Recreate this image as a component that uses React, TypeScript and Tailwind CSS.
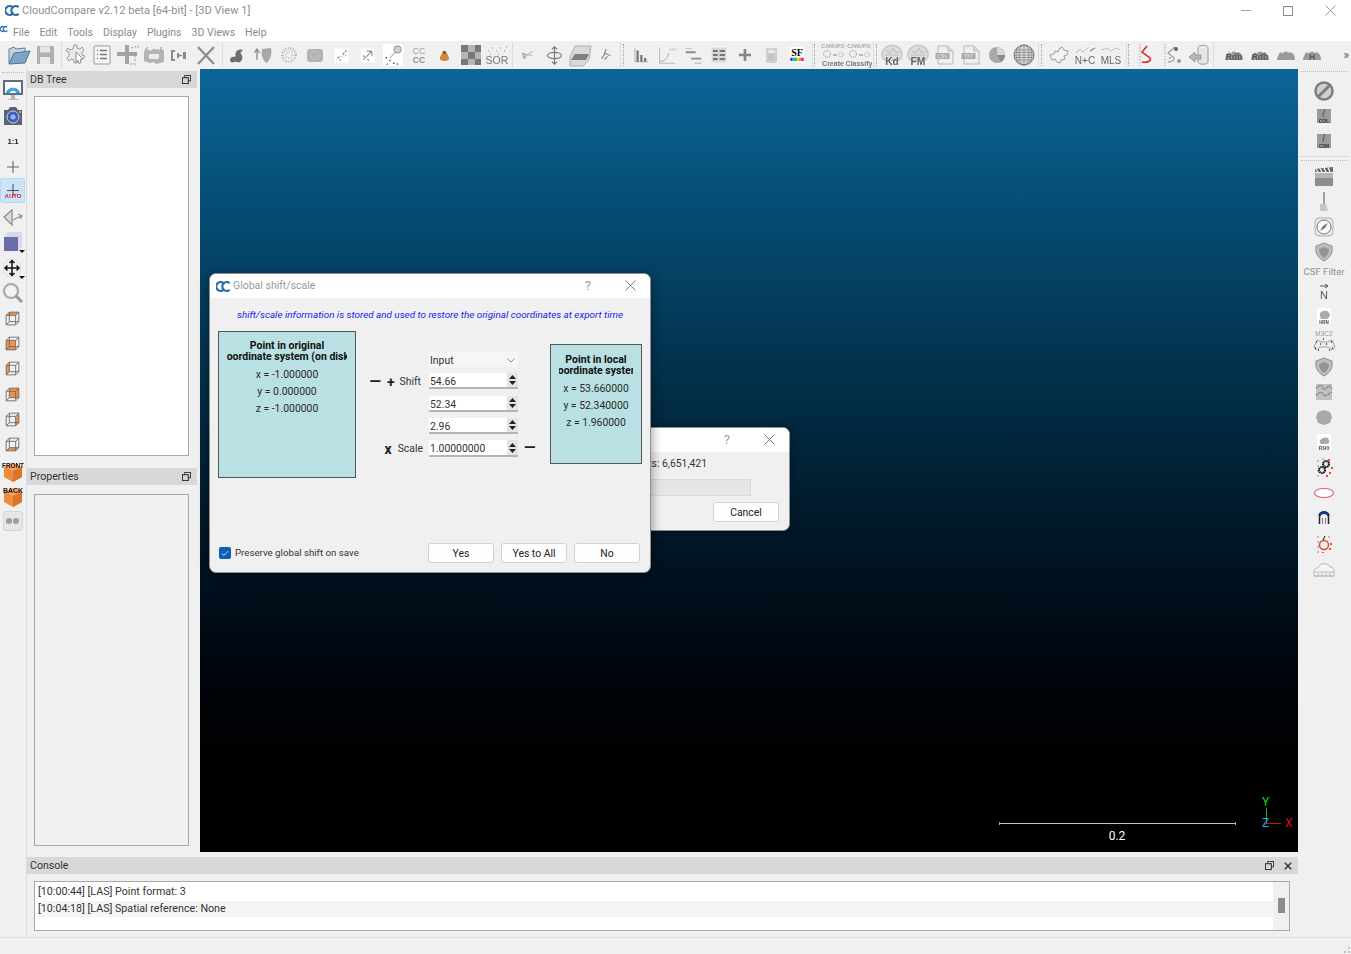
import type { ReactNode } from "react"

const FONT = "[font-family:Roboto,sans-serif]"

function Svg({ children, size = 24 }: { children: ReactNode; size?: number }) {
  return (
    <svg viewBox="0 0 24 24" width={size} height={size} className="blur-[0.35px] shrink-0" fontFamily="Liberation Sans, sans-serif">
      {children}
    </svg>
  )
}

function Logo({ size = 14 }: { size?: number }) {
  return (
    <svg viewBox="0 0 22 18" width={size} height={size} className="shrink-0">
      <path d="M11 4a6.500 6.500 0 1 0 0 10" fill="none" stroke="#2b6ea6" strokeWidth="3.400" />
      <path d="M20 4a6.500 6.500 0 1 0 0 10" fill="none" stroke="#2b6ea6" strokeWidth="3.400" />
    </svg>
  )
}

function Brain({ label }: { label: string }) {
  return (
    <Svg size={26}>
      <path d="M3 14c-2-6 4-11 9-11s11 4 9 11c-1 2-3 3-5 3H7c-2 0-3-1-4-3z" fill="#dcdcdc" stroke="#bdbdbd" />
      <path d="M6 8l4 2 3-4 3 4 3-1M5 12h14" fill="none" stroke="#c2c2c2" />
      <text x="12" y="21" fontSize="9.500" fontWeight="700" fill="#666666" textAnchor="middle">{label}</text>
    </Svg>
  )
}

function FileIcon({ label }: { label: string }) {
  return (
    <Svg>
      <path d="M5 3h10l5 5v13H5z" fill="#eeeeee" stroke="#b8b8b8" />
      <path d="M15 3v5h5" fill="#dddddd" stroke="#b8b8b8" />
      <rect x="2.500" y="10" width="14" height="6" fill="#a9a9a9" />
      <text x="9.500" y="15" fontSize="5" fill="#eeeeee" textAnchor="middle">{label}</text>
    </Svg>
  )
}

function Canupo({ label }: { label: string }) {
  return (
    <svg viewBox="0 0 26 26" width={26} height={26} className="blur-[0.35px] shrink-0" fontFamily="Liberation Sans, sans-serif">
      <text x="13" y="5.500" fontSize="5.400" fontWeight="700" fill="#a8a8a8" textAnchor="middle">CANUPO</text>
      <circle cx="7" cy="12" r="3.400" fill="none" stroke="#7f7f7f" strokeDasharray="1 1" />
      <path d="M13 13h4" stroke="#7f7f7f" />
      <circle cx="21" cy="12.500" r="2.400" fill="none" stroke="#9d9d9d" strokeDasharray="1 1" />
      <text x="13" y="23.500" fontSize="7" fontWeight="700" fill="#777777" textAnchor="middle">{label}</text>
    </svg>
  )
}

function BlobText({ label }: { label: string }) {
  return (
    <Svg>
      <path d="M3 17c0-3 1-3 2-6 1-2 3-2 4 0 1-3 4-3 5-1 1-1 4-1 5 1 1 0 2 3 2 6z" fill="#9a9a9a" />
      <text x="12" y="16.500" fontSize="8.500" fontWeight="700" fill="#555555" textAnchor="middle">{label}</text>
    </Svg>
  )
}

function Cube({ face }: { face: "top" | "front" | "left" | "back" | "right" | "bottom" }) {
  const faces = {
    top: "M4 8l4-4h12l-4 4z",
    front: "M4 8h12v12H4z",
    left: "M4 8l4-4v12l-4 4z",
    back: "M8 4h12v12H8z",
    right: "M16 8l4-4v12l-4 4z",
    bottom: "M4 20l4-4h12l-4 4z",
  }
  return (
    <Svg size={19}>
      <path d={faces[face]} fill="#f0914a" />
      <path d="M4 8h12v12H4zM8 4h12v12H8zM4 8l4-4M16 8l4-4M4 20l4-4M16 20l4-4" fill="none" stroke="#666666" strokeWidth="1.100" />
    </Svg>
  )
}

function OrangeCube({ label }: { label: string }) {
  return (
    <Svg>
      <path d="M12 5l9 4v10l-9 5-9-5V9z" fill="#ef8b3f" />
      <path d="M3 9l9 4 9-4-9-4z" fill="#f7a765" />
      <path d="M12 13v11l9-5V9z" fill="#d9762c" />
      <text x="12" y="9.500" fontSize={label === "FRONT" ? 6.400 : 7} fontWeight="700" fill="#111111" textAnchor="middle">{label}</text>
    </Svg>
  )
}

const G = "#9b9b9b"

const topIcons: Record<string, ReactNode> = {
  open: (
    <Svg>
      <path d="M2 20V6l5-2 2 2 9-1v4" fill="#c9d3dd" stroke="#5f7f9c" />
      <path d="M2 21l5-11 16-2-5 12z" fill="#7da3c6" stroke="#4f7396" />
    </Svg>
  ),
  save: (
    <Svg>
      <path d="M4 3h16l1 1v17H4z" fill="#b0b0b0" />
      <rect x="7" y="3.500" width="10" height="6" fill="#e6e6e6" />
      <rect x="7" y="14" width="10" height="7" fill="#e9e9e9" />
    </Svg>
  ),
  gear: (
    <Svg>
      <path d="M10 2h3v3l3 1 2-2 2 3-2 2v3l3 1-2 3-3-1-2 2-1 3h-3v-3l-3-1-2 2-2-3 2-2V9L2 8l2-3 2 2 3-1z" fill="#e9e9e9" stroke={G} />
      <path d="M12 9l7 7-3 .5 1 3-2 1-1-3-2 1.500z" fill="#ffffff" stroke="#8a8a8a" />
    </Svg>
  ),
  list: (
    <Svg>
      <rect x="4" y="3" width="16" height="18" rx="1" fill="#f5f5f5" stroke={G} />
      <path d="M7 7.500h1M10 7.500h7M7 11.500h1M10 11.500h7M7 15.500h1M10 15.500h7" stroke="#777777" strokeWidth="1.400" />
    </Svg>
  ),
  move: (
    <Svg>
      <path d="M9 2h4v7h8v4h-8v8H9v-8H1V9h8z" fill="#a3a3a3" />
      <path d="M15 5l7-2v2M19 9v10M14 21h6" fill="none" stroke="#9b9b9b" strokeDasharray="2 1.500" />
    </Svg>
  ),
  merge: (
    <Svg>
      <path d="M2 8l4-2 2 2 3-2 11 1v12l-8 2-2-2-4 1-6-2z" fill="#b3b3b3" />
      <path d="M7 11h10v5H7z" fill="#ececec" />
      <path d="M3 7l3-3M19 4v4" stroke="#8c8c8c" />
    </Svg>
  ),
  subsample: (
    <Svg>
      <path d="M7 8H4v9h3" fill="none" stroke="#8a8a8a" strokeWidth="2" />
      <path d="M10 12.500h4" stroke="#8a8a8a" strokeWidth="1.500" />
      <rect x="15" y="9" width="3" height="7" fill="#8a8a8a" />
      <rect x="9" y="10" width="2" height="5" fill="#8a8a8a" />
    </Svg>
  ),
  del: (
    <Svg>
      <path d="M4 4l16 17M20 4L4 21" stroke="#8f8f8f" strokeWidth="2.400" />
    </Svg>
  ),
  smooth: (
    <Svg>
      <path d="M5 17c0-3 3-4 5-3 1-2 0-3 1-5 2-3 6-3 7-1-2 0-3 1-2 3 2 2 2 6-1 8-3 1-4-1-6 0-2 1-4 0-4-2z" fill="#6d6d6d" />
    </Svg>
  ),
  shieldUp: (
    <Svg>
      <path d="M11 6c3 0 6-1 9-1 1 6 0 11-4.500 15C11 17 10 11 11 6z" fill="#a8a8a8" />
      <path d="M6 17V7M3.500 10L6 6l2.500 4" fill="none" stroke="#8c8c8c" strokeWidth="1.300" />
    </Svg>
  ),
  dots: (
    <Svg size={20}>
      <circle cx="12" cy="12" r="8" fill="none" stroke="#a5a5a5" strokeWidth="3" strokeDasharray="1 2" />
      <circle cx="12" cy="12" r="4" fill="none" stroke="#b0b0b0" strokeWidth="2" strokeDasharray="1 2" />
    </Svg>
  ),
  rounded: (
    <Svg>
      <rect x="4" y="6" width="16" height="13" rx="3" fill="#b4b4b4" />
      <circle cx="12" cy="12.500" r="4" fill="none" stroke="#d8d8d8" strokeDasharray="1 1" />
    </Svg>
  ),
  scatter: (
    <svg viewBox="0 0 24 24" width={15} height={15} className="blur-[0.35px] shrink-0">
      <rect x="1" y="1" width="22" height="22" fill="#ffffff" />
      <path d="M4 19l6-6 3 1 5-8" fill="none" stroke="#b5b5b5" />
      <path d="M14 8l2 2M18 4l2 2M6 14l2 2M9 19l2 1M18 12l1 1" stroke="#777777" strokeWidth="1.800" />
    </svg>
  ),
  arrows: (
    <svg viewBox="0 0 24 24" width={15} height={15} className="blur-[0.35px] shrink-0">
      <rect x="1" y="1" width="22" height="22" fill="#ffffff" />
      <path d="M5 19L19 5M19 5h-8M19 5v8" fill="none" stroke="#8f8f8f" strokeWidth="1.800" />
      <path d="M5 12l2 2M12 18l2 2" stroke="#777777" strokeWidth="1.800" />
    </svg>
  ),
  probe: (
    <svg viewBox="0 0 24 24" width={22} height={22} className="blur-[0.35px] shrink-0">
      <rect x="1" y="0" width="22" height="24" fill="#ffffff" />
      <circle cx="17" cy="6" r="4" fill="#cfcfcf" stroke="#8a8a8a" />
      <path d="M14 9l-5 6" stroke="#8a8a8a" />
      <path d="M4 15h1.500M8 18h1.500M5 22h1.500M12 21h1.500M16 22h1.500" stroke="#444444" strokeWidth="1.500" />
    </svg>
  ),
  cc: (
    <Svg>
      <text x="12" y="11" fontSize="8.500" fill="#9a9a9a" textAnchor="middle">CC</text>
      <text x="12" y="19.500" fontSize="8.500" fontWeight="700" fill="#8a8a8a" textAnchor="middle">CC</text>
    </Svg>
  ),
  blob: (
    <Svg size={20}>
      <path d="M9 10c0-3 4-3 5-1l3 7c0 4-9 4-11 1-1-2 1-5 3-7z" fill="#d28440" />
      <circle cx="11" cy="9" r="2" fill="#8a5a2c" />
    </Svg>
  ),
  checker: (
    <svg viewBox="0 0 20 20" width={20} height={20} className="shrink-0">
      <rect width="20" height="20" fill="#b5b5b5" />
      <path d="M0 0h7v7H0zM14 0h6v7h-6zM7 7h7v7H7zM0 14h7v6H0zM14 14h6v6h-6z" fill="#777777" />
    </svg>
  ),
  sor: (
    <Svg>
      <text x="12" y="21" fontSize="10.500" fill="#777777" textAnchor="middle">SOR</text>
      <path d="M3 8h1M7 5h1M11 8h1M15 5h1M19 8h1M5 11h1M13 11h1M21 4h1" stroke="#8a8a8a" />
    </Svg>
  ),
  scissor: (
    <Svg size={18}>
      <path d="M4 10l14 3M5 16l13-9" stroke="#a0a0a0" />
      <circle cx="6" cy="11" r="1.500" fill="none" stroke="#888888" />
      <circle cx="7" cy="15" r="1.500" fill="none" stroke="#888888" />
    </Svg>
  ),
  rotate: (
    <Svg size={21}>
      <path d="M12 2v20M9 5l3-3 3 3M9 19l3 3 3-3" fill="none" stroke="#777777" strokeWidth="1.300" />
      <ellipse cx="12" cy="12" rx="8" ry="3.500" fill="none" stroke="#777777" strokeWidth="1.300" />
    </Svg>
  ),
  slice: (
    <Svg>
      <path d="M2 14l5-11h16l-2 14-6 6H2z" fill="#d9d9d9" stroke="#b0b0b0" />
      <path d="M3 17l4-6h14l-3 6z" fill="#7f7f7f" />
    </Svg>
  ),
  star: (
    <Svg size={18}>
      <path d="M12 4l-2 7-4 6M9 9l9 4M14 14l-4 4" stroke="#8f8f8f" strokeWidth="1.800" fill="none" />
    </Svg>
  ),
  hist: (
    <Svg size={18}>
      <path d="M4 3v18h18" fill="none" stroke="#9a9a9a" />
      <path d="M6 6h3v15H6zM11 12h3v9h-3zM16 16h3v5h-3z" fill="#777777" />
    </Svg>
  ),
  curve: (
    <Svg size={22}>
      <path d="M4 4v17h17" fill="none" stroke="#b5b5b5" />
      <path d="M4 19c6 0 8-3 10-9" fill="none" stroke="#a5a5a5" />
      <path d="M15 6h7" stroke="#bbbbbb" strokeDasharray="1 1" strokeWidth="2" />
    </Svg>
  ),
  minmax: (
    <Svg size={22}>
      <path d="M4 9h11M10 16h11" stroke="#8c8c8c" strokeWidth="2" />
      <path d="M4 5h7M14 21h7" stroke="#bdbdbd" strokeWidth="1.500" strokeDasharray="1.500 .5" />
    </Svg>
  ),
  table: (
    <Svg size={16}>
      <rect x="1" y="1" width="22" height="22" fill="#d7d7d7" />
      <path d="M3 6h7M13 6h8M3 12h7M13 12h8M3 18h7M13 18h8" stroke="#777777" strokeWidth="3" />
    </Svg>
  ),
  plus: (
    <Svg size={16}>
      <path d="M12 3v18M3 12h18" stroke="#858585" strokeWidth="4" />
    </Svg>
  ),
  calc: (
    <Svg size={15}>
      <rect x="4" y="1" width="16" height="22" rx="1" fill="#d0d0d0" stroke="#c0c0c0" />
      <rect x="7" y="4" width="10" height="4" fill="#efefef" />
      <path d="M7 11h10M7 14.500h10M7 18h10" stroke="#a8a8a8" strokeDasharray="2 1" strokeWidth="1.500" />
    </Svg>
  ),
  sf: (
    <svg viewBox="0 0 24 24" width={16} height={16} className="shrink-0" fontFamily="Liberation Serif, serif">
      <rect x="1" y="0" width="22" height="24" fill="#ffffff" />
      <text x="12" y="14" fontSize="15" fontWeight="700" fill="#000000" textAnchor="middle">SF</text>
      <path d="M2 16h3.500v5H2z" fill="#1c3fd8" />
      <path d="M5.500 16h3.500v5H5.500z" fill="#18b7e4" />
      <path d="M9 16h3v5H9z" fill="#32c234" />
      <path d="M12 16h3v5h-3z" fill="#f1e21b" />
      <path d="M15 16h3.500v5H15z" fill="#f08a16" />
      <path d="M18.500 16H22v5h-3.500z" fill="#e11a78" />
    </svg>
  ),
  pie: (
    <Svg>
      <circle cx="12" cy="12" r="8" fill="#a8a8a8" />
      <path d="M12 12V4a8 8 0 0 1 8 8z" fill="#d5d5d5" />
      <path d="M12 12l8 0a8 8 0 0 1-4 7z" fill="#8a8a8a" />
    </Svg>
  ),
  globe: (
    <Svg>
      <circle cx="12" cy="12" r="10" fill="#dddddd" stroke="#777777" />
      <ellipse cx="12" cy="12" rx="5" ry="10" fill="none" stroke="#777777" strokeWidth="0.700" />
      <ellipse cx="12" cy="12" rx="8" ry="10" fill="none" stroke="#777777" strokeWidth="0.700" />
      <path d="M12 2v20M2 12h20M3.500 7h17M3.500 17h17M2.500 9.500h19M2.500 14.500h19" stroke="#777777" strokeWidth="0.700" />
    </Svg>
  ),
  puzzle: (
    <Svg>
      <path d="M3 12l4-1 1-3 3 1 1-3 3-2 2 3 4 1-1 4-3 1 1 3-4 1-1 3-3-1-2-3-3 1z" fill="#f2f2f2" stroke="#9d9d9d" />
    </Svg>
  ),
  nc: (
    <Svg>
      <path d="M3 10l4-4 3 3 6-5" fill="none" stroke="#a5a5a5" strokeDasharray="2 1" />
      <path d="M17 8l5-3" stroke="#8a8a8a" strokeWidth="1.400" />
      <text x="12" y="21" fontSize="10" fill="#666666" textAnchor="middle">N+C</text>
    </Svg>
  ),
  mls: (
    <Svg>
      <path d="M3 7l5-2 4 3 5-3 4 2" fill="none" stroke="#a5a5a5" strokeDasharray="2 1" />
      <text x="12" y="21" fontSize="10" fill="#666666" textAnchor="middle">MLS</text>
    </Svg>
  ),
  redS: (
    <Svg>
      <path d="M7 1v22" stroke="#a8a8a8" strokeDasharray="1.500 1.500" />
      <path d="M14 3L9 9l8 6c2 3-3 5-8 4" fill="none" stroke="#e02020" strokeWidth="1.500" />
    </Svg>
  ),
  sDots: (
    <Svg>
      <path d="M5 1v22" stroke="#a8a8a8" strokeDasharray="1.500 1.500" />
      <path d="M15 4L8 10l6 5c1 2-2 4-6 4" fill="none" stroke="#a0a0a0" strokeWidth="1.300" />
      <circle cx="16" cy="6" r="2" fill="#666666" />
      <circle cx="19" cy="18" r="2" fill="#999999" />
      <circle cx="10" cy="15" r="1" fill="#999999" />
    </Svg>
  ),
  cyl: (
    <Svg>
      <ellipse cx="16" cy="5" rx="5" ry="2.500" fill="#eeeeee" stroke="#9a9a9a" />
      <path d="M11 5v14c0 3 10 3 10 0V5" fill="#e6e6e6" stroke="#9a9a9a" />
      <path d="M2 14l6-5v3h6v4H8v3z" fill="#b5b5b5" stroke="#9a9a9a" />
    </Svg>
  ),
}

const rightIcons: Record<string, ReactNode> = {
  stop: (
    <Svg>
      <circle cx="12" cy="12" r="8.500" fill="#cfcfcf" stroke="#7e7e7e" strokeWidth="2.500" />
      <path d="M6 18L18 6" stroke="#7e7e7e" strokeWidth="3" />
    </Svg>
  ),
  col: (
    <Svg>
      <rect x="5" y="5" width="14" height="14" fill="#9a9a9a" />
      <path d="M12 5c2 3-3 5 0 8" fill="none" stroke="#555555" />
      <text x="12" y="18.500" fontSize="5" fontWeight="700" fill="#333333" textAnchor="middle">COL</text>
    </Svg>
  ),
  csm: (
    <Svg>
      <rect x="5" y="5" width="14" height="14" fill="#9a9a9a" />
      <path d="M12 5c2 3-3 5 0 8" fill="none" stroke="#555555" />
      <text x="12" y="18.500" fontSize="4.500" fontWeight="700" fill="#333333" textAnchor="middle">CSM</text>
    </Svg>
  ),
  clap: (
    <Svg>
      <path d="M3 4l18-2v5H3z" fill="#666666" />
      <path d="M4 4l2 3M8 3.500l2 3.500M12 3l2 4M16 2.500l2 4.500" stroke="#ffffff" strokeWidth="1.200" />
      <path d="M3 8h18v13H3z" fill="#8d8d8d" />
      <path d="M3 8h18v5H3z" fill="#b6b6b6" />
    </Svg>
  ),
  brush: (
    <Svg>
      <rect x="11" y="2" width="2" height="12" fill="#a0a0a0" />
      <path d="M8 14h6l2 7H8z" fill="#c5c5c5" />
    </Svg>
  ),
  compass: (
    <Svg>
      <rect x="3" y="3" width="18" height="18" rx="4" fill="#e8e8e8" stroke="#b0b0b0" />
      <circle cx="12" cy="12" r="7" fill="#f8f8f8" stroke="#777777" />
      <path d="M8 16l3-5 5-3-3 5z" fill="#777777" />
    </Svg>
  ),
  shield: (
    <Svg>
      <path d="M12 3l8 3c1 7-2 12-8 15-6-3-9-8-8-15z" fill="#bdbdbd" stroke="#8e8e8e" />
      <path d="M12 7l5 2c0 4-2 7-5 9-3-2-5-5-5-9z" fill="#949494" />
    </Svg>
  ),
  north: (
    <Svg>
      <path d="M8 7h8M13 5l3 2-3 2" fill="none" stroke="#555555" />
      <text x="12" y="20" fontSize="11" fill="#555555" textAnchor="middle">N</text>
    </Svg>
  ),
  hpr: (
    <svg viewBox="0 0 24 24" width={24} height={24} className="blur-[0.35px] shrink-0" fontFamily="Liberation Sans, sans-serif">
      <rect x="5" y="4" width="14" height="16" fill="#ffffff" />
      <path d="M8 12c-2-5 8-7 9-3 2 2 0 6-3 6H9z" fill="#aaaaaa" />
      <text x="12" y="19.500" fontSize="4.500" fontWeight="700" fill="#444444" textAnchor="middle">HRN</text>
    </svg>
  ),
  m3c2: (
    <svg viewBox="0 0 26 24" width={26} height={24} className="blur-[0.35px] shrink-0" fontFamily="Liberation Sans, sans-serif">
      <text x="13" y="6" fontSize="6.500" fill="#999999" textAnchor="middle">M3C2</text>
      <path d="M3 17l3-7 5 2h5l5-2 3 7-3 3-4-3H9l-4 3z" fill="#ececec" stroke="#a0a0a0" />
      <path d="M5 12h1M9 14h1M15 14h1M20 12h1M4 18h1M21 18h1M7 20h1M18 20h1M12 9h1" stroke="#333333" strokeWidth="1.500" />
    </svg>
  ),
  noise: (
    <Svg>
      <rect x="4" y="4" width="16" height="16" fill="#c0c0c0" />
      <path d="M4 8l5-3 3 5 5-4 3 3M4 15l5-3 4 4 7-4" fill="none" stroke="#888888" strokeWidth="1.500" strokeDasharray="2 1" />
    </Svg>
  ),
  ball: (
    <Svg>
      <path d="M12 5l6 2 2 5-2 6-6 2-6-2-2-6 2-5z" fill="#a8a8a8" />
    </Svg>
  ),
  rgb: (
    <svg viewBox="0 0 24 24" width={24} height={24} className="blur-[0.35px] shrink-0" fontFamily="Liberation Sans, sans-serif">
      <rect x="5" y="4" width="14" height="16" fill="#ffffff" />
      <path d="M8 13c-2-5 8-8 9-3 1 2 0 4-3 4H9z" fill="#aaaaaa" />
      <text x="12" y="20" fontSize="6" fontWeight="700" fill="#555555" textAnchor="middle">R90</text>
    </svg>
  ),
  gears: (
    <Svg>
      <path d="M5 5h2v2H5zM5 10h2v2H5zM5 15h2v2H5zM5 20h2v2H5zM10 3h2v2h-2z" fill="#bdbdbd" />
      <path d="M16 4h2v2h-2zM19 12h2v2h-2zM17 17h2v2h-2zM14 20h2v2h-2z" fill="#ef4a2a" />
      <circle cx="14" cy="9" r="3" fill="none" stroke="#111111" strokeWidth="2" strokeDasharray="1.500 .5" />
      <circle cx="10" cy="15" r="3" fill="none" stroke="#111111" strokeWidth="2" strokeDasharray="1.500 .5" />
    </Svg>
  ),
  ellipse: (
    <Svg>
      <ellipse cx="12" cy="12" rx="9.500" ry="4.500" fill="#ffffff" stroke="#e8577a" strokeWidth="1.200" />
    </Svg>
  ),
  magnet: (
    <Svg size={18}>
      <path d="M6 20v-9c0-7 12-7 12 0v9" fill="none" stroke="#222222" strokeWidth="2" />
      <path d="M6 9c0-6 12-6 12 0" fill="none" stroke="#1c2f8a" strokeWidth="3.500" />
      <path d="M10 20v-8M14 20v-8" stroke="#555555" />
    </Svg>
  ),
  flame: (
    <Svg>
      <path d="M5 5h2v2H5zM5 10h2v2H5zM5 15h2v2H5zM5 20h2v2H5zM16 5h2v2h-2z" fill="#bdbdbd" />
      <path d="M18 12h2v2h-2zM17 17h2v2h-2zM10 21h2v1h-2z" fill="#ef4a2a" />
      <circle cx="12" cy="14" r="4.500" fill="none" stroke="#d94a30" strokeWidth="1.500" />
      <path d="M11 9l2-4" stroke="#111111" />
    </Svg>
  ),
  cloud: (
    <Svg>
      <path d="M2 20v-5c0-2 2-3 4-3 1-5 10-6 12-1 3 0 4 2 4 4v5z" fill="#f4f4f4" stroke="#b5b5b5" />
      <path d="M2 16h20M2 20h20M6 16v4M10 16v4M14 16v4M18 16v4" stroke="#b5b5b5" strokeWidth="0.800" />
    </Svg>
  ),
}

function Btn({ children }: { children: ReactNode }) {
  return <div className="flex-1 min-w-[26px] flex items-center justify-center">{children}</div>
}

function Line({ className }: { className: string }) {
  return <div className={`w-px h-[26px] bg-[#dcdcdc] shrink-0 ${className}`} />
}

function Dots({ className }: { className: string }) {
  return <div className={`w-0 h-[22px] border-l border-dotted border-[#a0a0a0] shrink-0 ${className}`} />
}

function Group({ names, className = "" }: { names: string[]; className?: string }) {
  return (
    <div className={`flex h-full ${className}`}>
      {names.map((n, i) => (
        <Btn key={i}>{topIcons[n]}</Btn>
      ))}
    </div>
  )
}

function TopToolbar() {
  return (
    <div className="h-[28px] bg-[#f0f0f0] flex items-center pl-[6px]">
      <Group names={["open", "save"]} />
      <Line className="ml-[3px] mr-[1px]" />
      <Group names={["gear", "list", "move", "merge", "subsample", "del"]} />
      <Line className="ml-[3px] mr-[1px]" />
      <Group names={["smooth", "shieldUp", "dots", "rounded", "scatter", "arrows", "probe", "cc", "blob", "checker", "sor"]} />
      <Line className="ml-[2px] mr-[2px]" />
      <Group names={["scissor", "rotate", "slice", "star"]} />
      <Line className="ml-[1px] mr-[2px]" />
      <Dots className="mr-[4px]" />
      <Group names={["hist", "curve", "minmax", "table", "plus", "calc", "sf"]} />
      <Line className="ml-[2px] mr-[1px]" />
      <Dots className="mr-[5px]" />
      <div className="flex h-full">
        <Btn><Canupo label="Create" /></Btn>
        <Btn><Canupo label="Classify" /></Btn>
      </div>
      <Line className="ml-[1px] mr-[2px]" />
      <Dots className="mr-[2px]" />
      <div className="flex h-full w-[158px]">
        <Btn><Brain label="Kd" /></Btn>
        <Btn><Brain label="FM" /></Btn>
        <Btn><FileIcon label="CSV" /></Btn>
        <Btn><FileIcon label="TXT" /></Btn>
        <Btn>{topIcons.pie}</Btn>
        <Btn>{topIcons.globe}</Btn>
      </div>
      <Line className="ml-[1px] mr-[2px]" />
      <Dots className="mr-[4px]" />
      <Group names={["puzzle", "nc", "mls"]} />
      <Line className="ml-[2px] mr-[1px]" />
      <Dots className="mr-[2px]" />
      <Group names={["redS", "sDots", "cyl"]} className="w-[81px]" />
      <Line className="ml-[1px] mr-[7px]" />
      <div className="flex h-full">
        <Btn><BlobText label="Rdb" /></Btn>
        <Btn><BlobText label="Rdb" /></Btn>
        <Btn><BlobText label="" /></Btn>
        <Btn><BlobText label="H" /></Btn>
      </div>
      <span className="ml-auto mr-[2px] text-[12px] text-[#555555]">»</span>
    </div>
  )
}

function LeftToolbar() {
  const items: ReactNode[] = [
    <Svg key="screen">
      <rect x="2" y="1" width="20" height="15" fill="#5c6f80" />
      <rect x="4" y="3" width="16" height="11" fill="#ffffff" />
      <path d="M5 14c1-7 13-7 14 0z" fill="#3ea7e0" />
      <path d="M9 14c0-3 6-3 6 0z" fill="#ffffff" />
      <path d="M10 16h4v4h3v1H7v-1h3z" fill="#b5b5b5" />
    </Svg>,
    <Svg key="cam">
      <path d="M3 6h4l2-3h6l2 3h4v15H3z" fill="#5a6372" />
      <circle cx="12" cy="13" r="6" fill="#3f5fc0" stroke="#c7d0de" />
      <circle cx="12" cy="13" r="2.500" fill="#9fb4ea" />
      <circle cx="19" cy="8" r="1" fill="#e6c84a" />
    </Svg>,
    <Svg key="one" size={22}>
      <text x="12" y="15" fontSize="8.500" fontWeight="700" fill="#222222" textAnchor="middle">1:1</text>
    </Svg>,
    <Svg key="cross">
      <path d="M12 6v12M6 12h12" stroke="#666666" strokeWidth="1.100" />
    </Svg>,
    <div key="auto" className="w-[25px] h-[25px] -mt-[2px] bg-[#cce4f7] border border-[#b8d8f2] rounded-[2px] flex items-center justify-center">
      <Svg>
        <path d="M12 5v13M6 11.500h12" stroke="#555555" strokeWidth="1.100" />
        <text x="12" y="19" fontSize="6" fontWeight="700" fill="#e5172f" textAnchor="middle">AUTO</text>
      </Svg>
    </div>,
    <Svg key="persp">
      <path d="M3 12l8-7v15z" fill="#dcdcdc" stroke="#8e8e8e" strokeWidth="1.300" />
      <path d="M12 15l8-4M17 9l4 2-2 3" fill="none" stroke="#8e8e8e" strokeWidth="1.300" />
    </Svg>,
    <Svg key="box">
      <path d="M3 7l4-5h14v14l-4 5H3z" fill="#d6d8e8" />
      <path d="M3 7h14v14H3z" fill="#6a6da8" />
      <path d="M18 20h6l-3 3z" fill="#111111" />
    </Svg>,
    <Svg key="pan">
      <circle cx="11" cy="12" r="9" fill="none" stroke="#b6e3c7" strokeDasharray="2 1" />
      <path d="M11 5v14M4 12h14M8.500 7L11 4.500 13.500 7M8.500 17l2.500 2.500 2.500-2.500M6.500 9.500L4 12l2.500 2.500M15.500 9.500L18 12l-2.500 2.500" fill="none" stroke="#111111" strokeWidth="1.500" />
      <path d="M18 20h6l-3 3z" fill="#111111" />
    </Svg>,
    <Svg key="zoom">
      <circle cx="10" cy="10" r="7" fill="#f3f3f3" stroke="#a8a8a8" strokeWidth="2.200" />
      <path d="M15 15l6 6" stroke="#9a9a9a" strokeWidth="3" />
    </Svg>,
    <Cube key="c1" face="top" />,
    <Cube key="c2" face="front" />,
    <Cube key="c3" face="left" />,
    <Cube key="c4" face="back" />,
    <Cube key="c5" face="right" />,
    <Cube key="c6" face="bottom" />,
    <OrangeCube key="f" label="FRONT" />,
    <OrangeCube key="b" label="BACK" />,
    <div key="gl" className="w-[20px] h-[20px] rounded-[3px] bg-[#e6e6e6] border border-[#d4d4d4] flex items-center justify-center gap-px">
      <div className="w-[6px] h-[6px] rounded-full bg-[#9c9c9c]" />
      <div className="w-[6px] h-[6px] rounded-full bg-[#9c9c9c]" />
    </div>,
  ]
  return (
    <div className="w-[27px] shrink-0 border-r border-[#dcdcdc] flex flex-col pt-[9px] pr-[1px] relative">
      <div className="absolute top-[3px] left-[2px] right-[2px] border-t border-dotted border-[#bdbdbd]" />
      {items.map((it, i) => (
        <div key={i} className="h-[25.3px] flex items-center justify-center">{it}</div>
      ))}
    </div>
  )
}

function RightToolbar() {
  const first = ["stop", "col", "csm"]
  const second = ["clap", "brush", "compass", "shield"]
  const third = ["north", "hpr", "m3c2", "shield", "noise", "ball", "rgb", "gears", "ellipse", "magnet", "flame", "cloud"]
  return (
    <div className="w-[53px] shrink-0 flex flex-col items-stretch relative pr-[1px]">
      <div className="absolute top-[2px] left-[3px] right-[3px] border-t border-dotted border-[#bdbdbd]" />
      <div className="pt-[9px] pb-[1px] flex flex-col">
        {first.map((n, i) => (
          <div key={i} className="h-[25.4px] flex items-center justify-center">{rightIcons[n]}</div>
        ))}
      </div>
      <div className="border-t border-[#dcdcdc] mt-[1px]" />
      <div className="border-t border-dotted border-[#bdbdbd] mx-[3px] mt-[3px]" />
      <div className="pt-[3px] flex flex-col">
        {second.map((n, i) => (
          <div key={i} className="h-[25.1px] flex items-center justify-center">{rightIcons[n]}</div>
        ))}
        <div className="h-[15px] pt-[1px] flex items-center justify-center text-[9.6px] text-[#909090] whitespace-nowrap">CSF Filter</div>
        <div className="-mt-[1px] flex flex-col">
          {third.map((n, i) => (
            <div key={i} className="h-[25.2px] flex items-center justify-center">{rightIcons[n]}</div>
          ))}
        </div>
      </div>
    </div>
  )
}

function FloatIcon() {
  return (
    <svg viewBox="0 0 10 10" width={9} height={9} className="shrink-0">
      <rect x="3" y="0.500" width="6.500" height="6" fill="none" stroke="#333333" />
      <rect x="0.500" y="3" width="6.500" height="6.500" fill="#d8d8d8" stroke="#333333" strokeWidth="1.200" />
    </svg>
  )
}

function DockTitle({ title, close = false }: { title: string; close?: boolean }) {
  return (
    <div className="h-[17px] bg-[#d8d8d8] flex items-center pl-[3px] pr-[6px] text-[10.6px] text-[#333333] shrink-0">
      <span>{title}</span>
      <div className="ml-auto flex items-center gap-[10px]">
        <FloatIcon />
        {close && (
          <svg viewBox="0 0 10 10" width={8} height={8}>
            <path d="M1 1l8 8M9 1l-8 8" stroke="#333333" strokeWidth="1.800" />
          </svg>
        )}
      </div>
    </div>
  )
}

function CloseX({ size = 11, color = "#707070" }: { size?: number; color?: string }) {
  return (
    <svg viewBox="0 0 12 12" width={size} height={size} className="shrink-0">
      <path d="M.5.500l11 11M11.500.500l-11 11" stroke={color} />
    </svg>
  )
}

function Spin({ value }: { value: string }) {
  return (
    <div className="flex h-full w-[89px] shrink-0">
      <div className="w-[78px] bg-white border-b-2 border-[#b4b4b4] pl-[1px] pt-[3px] flex items-center text-[10.4px] text-[#333333]">{value}</div>
      <div className="w-[11px] bg-[#e4e4e4] border-b-2 border-[#b4b4b4] flex flex-col items-center justify-center gap-[2px]">
        <svg viewBox="0 0 7 4" width={7} height={4}><path d="M0 4l3.500-4L7 4z" fill="#222222" /></svg>
        <svg viewBox="0 0 7 4" width={7} height={4}><path d="M0 0l3.500 4L7 0z" fill="#222222" /></svg>
      </div>
    </div>
  )
}

function PointBox({ title, sub, lines, className }: { title: string; sub: string; lines: string[]; className: string }) {
  return (
    <div className={`bg-[#b9e0e3] border border-[#555555] shrink-0 flex flex-col items-center px-[8px] text-[#2a2a2a] ${className}`}>
      <div className="text-[10.5px] font-bold leading-[11px] text-[#111111] whitespace-nowrap">{title}</div>
      <div className="w-full overflow-hidden flex justify-center text-[10.5px] font-bold leading-[12px] text-[#111111] whitespace-nowrap mb-[3px]">{sub}</div>
      {lines.map((l) => (
        <div key={l} className="h-[17px] flex items-center text-[10.4px] whitespace-nowrap">{l}</div>
      ))}
    </div>
  )
}

function DlgButton({ label, className }: { label: string; className: string }) {
  return (
    <div className={`h-[20px] pt-[1px] bg-[#fdfdfd] border border-[#d2d2d2] rounded-[3px] flex items-center justify-center text-[10.4px] text-[#222222] ${className}`}>
      {label}
    </div>
  )
}

function ShiftDialog() {
  return (
    <div className="absolute left-[209px] top-[273px] w-[442px] h-[300px] rounded-[7px] bg-[#f0f0f0] border border-[#8f8f8f] shadow-[0_2px_12px_rgba(0,0,0,0.45)] flex flex-col overflow-hidden">
      <div className="h-[24px] bg-white flex items-center pl-[6px] text-[10.5px] text-[#999999] shrink-0">
        <Logo size={15} />
        <span className="ml-[2px]">Global shift/scale</span>
        <span className="ml-auto text-[13px] text-[#a0a0a0]">?</span>
        <div className="ml-[34px] mr-[14px] -mt-[1px]"><CloseX /></div>
      </div>
      <div className="mt-[8px] h-[17px] text-center text-[9.9px] italic text-[#2020ee] leading-[17px] whitespace-nowrap">
        shift/scale information is stored and used to restore the original coordinates at export time
      </div>
      <div className="flex items-start mt-[8px] pl-[8px] pr-[8px]">
        <PointBox
          title="Point in original"
          sub="coordinate system (on disk)"
          lines={["x = -1.000000", "y = 0.000000", "z = -1.000000"]}
          className="w-[138px] h-[147px] pt-[8px]"
        />
        <div className="w-[194px] shrink-0 flex flex-col pt-[21px] text-[10.4px] text-[#333333]">
          <div className="ml-[73px] w-[89px] h-[15px] bg-[#f6f6f6] flex items-center pl-[1px] pr-[3px] pt-[2px]">
            <span>Input</span>
            <svg viewBox="0 0 8 5" width={8} height={5} className="ml-auto"><path d="M.5.500L4 4 7.500.500" fill="none" stroke="#888888" /></svg>
          </div>
          <div className="h-[16px] mt-[6px] flex">
            <div className="w-[73px] flex items-center justify-end pr-[8px] pt-[1px]">
              <span className="font-bold text-[15px] text-[#222222] leading-none mr-[6px]">—</span>
              <span className="font-bold text-[14px] text-[#222222] leading-none mr-[5px]">+</span>
              <span>Shift</span>
            </div>
            <Spin value="54.66" />
          </div>
          <div className="h-[16px] mt-[7px] flex pl-[73px]"><Spin value="52.34" /></div>
          <div className="h-[16px] mt-[6px] flex pl-[73px]"><Spin value="2.96" /></div>
          <div className="h-[17px] mt-[6px] flex">
            <div className="w-[73px] flex items-center justify-end pr-[6px] pt-[1px]">
              <span className="font-bold text-[14px] text-[#222222] leading-none mr-[6px]">x</span>
              <span>Scale</span>
            </div>
            <Spin value="1.00000000" />
            <span className="ml-[6px] font-bold text-[15px] leading-[15px] text-[#222222]">—</span>
          </div>
        </div>
        <PointBox
          title="Point in local"
          sub="coordinate system"
          lines={["x = 53.660000", "y = 52.340000", "z = 1.960000"]}
          className="w-[92px] h-[120px] mt-[13px] pt-[9px]"
        />
      </div>
      <div className="mt-auto mb-[9px] flex items-center pl-[9px] pr-[10px]">
        <div className="w-[12px] h-[12px] rounded-[2px] bg-[#0a5fb4] flex items-center justify-center">
          <svg viewBox="0 0 10 8" width={8} height={7}><path d="M1 4l2.500 2.500L9 1" fill="none" stroke="#ffffff" /></svg>
        </div>
        <span className="ml-[4px] pt-[1px] text-[9.7px] text-[#333333]">Preserve global shift on save</span>
        <div className="ml-auto flex gap-[7px]">
          <DlgButton label="Yes" className="w-[66px]" />
          <DlgButton label="Yes to All" className="w-[66px]" />
          <DlgButton label="No" className="w-[66px]" />
        </div>
      </div>
    </div>
  )
}

function ProgressDialog() {
  return (
    <div className="absolute left-[500px] top-[427px] w-[290px] h-[104px] rounded-[7px] bg-[#f0f0f0] border border-[#8f8f8f] shadow-[0_2px_8px_rgba(0,0,0,0.35)] flex flex-col overflow-hidden">
      <div className="h-[24px] bg-white flex items-center justify-end text-[#a0a0a0] shrink-0">
        <span className="text-[13px]">?</span>
        <div className="ml-[34px] mr-[14px] -mt-[1px]"><CloseX /></div>
      </div>
      <div className="h-[24px] flex items-center justify-end w-[206px] text-[10.4px] text-[#333333]">Points: 6,651,421</div>
      <div className="h-[17px] mt-[3px] ml-[8px] w-[242px] bg-[#e6e6e6] border border-[#dadada]" />
      <div className="flex justify-end pr-[10px] mt-[6px]">
        <DlgButton label="Cancel" className="w-[66px]" />
      </div>
    </div>
  )
}

function GlView() {
  return (
    <div className="flex-1 relative bg-gradient-to-b from-[#0a6698] to-black">
      <div className="absolute left-[799px] top-[754px] w-[237px] h-px bg-[#c4c4c4]">
        <div className="absolute left-0 -top-[1px] w-px h-[3px] bg-[#a8a8a8]" />
        <div className="absolute right-0 -top-[1px] w-px h-[3px] bg-[#a8a8a8]" />
      </div>
      <div className="absolute left-[899px] top-[758px] w-[36px] text-center text-[12px] text-white">0.2</div>
      <div className="absolute left-[1060px] top-[724px] w-[36px] h-[38px] text-[12px] leading-none">
        <span className="absolute left-[2px] top-[3px] text-[#19d419]">Y</span>
        <div className="absolute left-[6px] top-[15px] w-px h-[15px] bg-[#19b319]" />
        <div className="absolute left-[6px] top-[30px] w-[15px] h-px bg-[#c81414]" />
        <span className="absolute left-[2px] top-[24px] text-[#19a5e6]">Z</span>
        <span className="absolute left-[25px] top-[24px] text-[#d01414]">X</span>
      </div>
    </div>
  )
}

export default function App() {
  return (
    <div className={`relative w-[1351px] h-[954px] bg-[#f0f0f0] overflow-hidden flex flex-col ${FONT}`}>
      <div className="h-[21px] bg-white flex items-center pl-[5px] shrink-0">
        <Logo size={15} />
        <span className="ml-[2px] pt-[1px] text-[11.1px] text-[#8f8f8f]">CloudCompare v2.12 beta [64-bit] - [3D View 1]</span>
        <div className="ml-auto flex items-center">
          <div className="w-[10px] h-px bg-[#a0a0a0] mr-[32px]" />
          <div className="w-[10px] h-[10px] border border-[#8a8a8a] mr-[32px]" />
          <div className="mr-[15px]"><CloseX size={11} color="#8a8a8a" /></div>
        </div>
      </div>
      <div className="h-[20px] bg-white flex items-center pt-[4px] text-[10.5px] text-[#8a8a8a] shrink-0">
        <div className="w-[13px] overflow-hidden -mt-[8px]"><Logo size={8} /></div>
        <div className="flex gap-[10px]">
          <span>File</span>
          <span>Edit</span>
          <span>Tools</span>
          <span>Display</span>
          <span>Plugins</span>
          <span>3D Views</span>
          <span>Help</span>
        </div>
      </div>
      <TopToolbar />
      <div className="flex-1 flex min-h-0">
        <LeftToolbar />
        <div className="flex-1 flex flex-col min-w-0">
          <div className="h-[783px] flex shrink-0">
            <div className="w-[170px] shrink-0 flex flex-col pt-[2px]">
              <DockTitle title="DB Tree" />
              <div className="mt-[8px] mx-[7px] mr-[8px] h-[360px] bg-white border border-[#a8a8a8]" />
              <div className="mt-[12px]"><DockTitle title="Properties" /></div>
              <div className="mt-[9px] mx-[7px] mr-[8px] h-[352px] border border-[#a8a8a8]" />
            </div>
            <div className="w-[3px] shrink-0" />
            <GlView />
          </div>
          <div className="mt-[5px]"><DockTitle title="Console" close /></div>
          <div className="mt-[7px] ml-[7px] mr-[8px] h-[50px] bg-white border border-[#a8a8a8] flex text-[10.7px] text-[#333333]">
            <div className="flex-1 flex flex-col pt-[2px] pl-[3px]">
              <div className="h-[17px] flex items-center">[10:00:44] [LAS] Point format: 3</div>
              <div className="h-[16px] flex items-center bg-[#f5f5f5]">[10:04:18] [LAS] Spatial reference: None</div>
            </div>
            <div className="w-[16px] bg-[#f0f0f0] flex justify-center pt-[16px]">
              <div className="w-[7px] h-[15px] bg-[#8c8c8c]" />
            </div>
          </div>
        </div>
        <RightToolbar />
      </div>
      <div className="h-[17px] border-t border-[#dcdcdc] shrink-0 relative">
        <div className="absolute right-[1px] bottom-[1px] w-[6px] h-[6px] border-r-2 border-b-2 border-dotted border-[#c4c4c4]" />
      </div>
      <ProgressDialog />
      <ShiftDialog />
    </div>
  )
}
